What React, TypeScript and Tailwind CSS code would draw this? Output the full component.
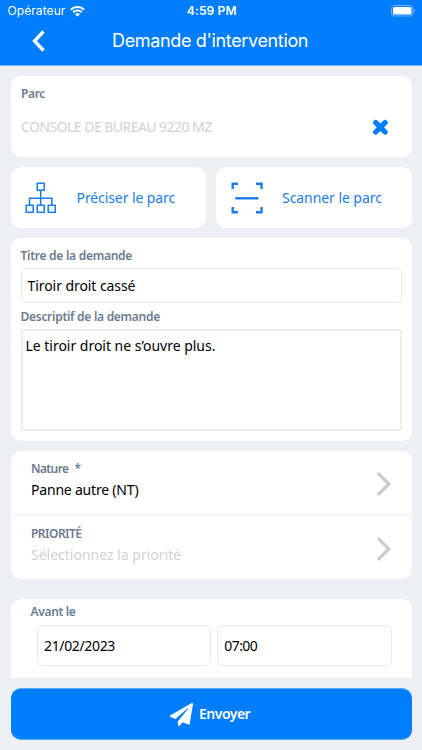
import type { ReactNode } from "react";
import { FaPaperPlane } from "react-icons/fa";

const label = "text-[12px] leading-4 font-semibold text-[#6c7b8e] whitespace-nowrap";
const value = "text-[14px] leading-5 whitespace-nowrap";

function WifiIcon() {
  return (
    <svg className="ml-[5px] h-[11px] w-[15px]" viewBox="0 0 15 11" fill="white">
      <path d="M7.5 0C4.7 0 2.100 1.100.2 2.900L1.600 4.400A8.500 8.500 0 0 1 13.400 4.400L14.800 2.900A10.600 10.600 0 0 0 7.500 0Z" />
      <path d="M7.500 3.600C5.600 3.600 3.900 4.300 2.600 5.500L4 7A5.100 5.100 0 0 1 11 7L12.400 5.500A7.200 7.200 0 0 0 7.500 3.600Z" />
      <path d="M7.500 7.100C6.500 7.100 5.600 7.500 5 8.100L7.500 10.700L10 8.100A3.600 3.600 0 0 0 7.500 7.100Z" />
    </svg>
  );
}

function BatteryIcon() {
  return (
    <svg className="h-[12px] w-[25px]" viewBox="0 0 25 12" fill="none">
      <rect x="0.500" y="0.500" width="21.500" height="10.500" rx="3" stroke="#6db4ff" />
      <rect x="2" y="2" width="18.500" height="7.500" rx="1.500" fill="white" />
      <path d="M23.300 4v3.600q1.100-.5 1.100-1.800t-1.100-1.800z" fill="#6db4ff" />
    </svg>
  );
}

function TreeIcon() {
  return (
    <svg className="h-[32px] w-[32px]" viewBox="0 0 32 32" fill="none" stroke="#1b7ce8" strokeWidth="1.500">
      <rect x="12.200" y="1.200" width="7" height="7" />
      <rect x="1.200" y="23.300" width="7" height="7" />
      <rect x="12.200" y="23.300" width="7" height="7" />
      <rect x="23.200" y="23.300" width="7" height="7" />
      <path d="M15.700 8.200V23.300M4.500 23.300V16.300H26.900V23.300" />
    </svg>
  );
}

function ScanIcon() {
  return (
    <svg className="h-[32px] w-[32px]" viewBox="0 0 32 32" fill="none" stroke="#1b7ce8" strokeWidth="2.400">
      <path d="M1.700 7V1.700H7M25 1.700H30.500V7M30.500 25V30.300H25M7 30.300H1.700V25" />
      <path d="M4.300 16.300H27.500" />
    </svg>
  );
}

function ChevronRight() {
  return (
    <svg className="mt-[2px] h-[24px] w-[15px] shrink-0" viewBox="0 0 15 24" fill="none" stroke="#cdcdcd" strokeWidth="3.300" strokeLinecap="round">
      <path d="M1.800 2L11.800 12L1.800 22" />
    </svg>
  );
}

function ActionCard({ icon, children }: { icon: ReactNode; children: ReactNode }) {
  return (
    <button className="flex h-[61px] flex-1 items-center rounded-[10px] bg-white pl-[14.5px]">
      {icon}
      {children}
    </button>
  );
}

export default function App() {
  return (
    <div className="flex h-[750px] w-[422px] flex-col overflow-hidden bg-[#edeff3] font-['Noto_Sans','Open_Sans',sans-serif] text-black">
      <header className="h-[66px] shrink-0 border-b border-[#75b6fb] bg-[#007dfb] font-['Inter','Liberation_Sans',sans-serif] text-white">
        <div className="grid h-[22px] grid-cols-[1fr_auto_1fr] items-center pr-[6px] pl-[7.5px] text-[12px] leading-4">
          <div className="flex items-center">
            <span className="tracking-[0.08px]">Opérateur</span>
            <WifiIcon />
          </div>
          <span className="font-semibold tracking-[0.150px]">4:59 PM</span>
          <div className="flex justify-end"><BatteryIcon /></div>
        </div>
        <div className="flex h-[38px] items-center">
          <svg className="ml-[31px] h-[22px] w-[15px]" viewBox="0 0 15 22" fill="none" stroke="white" strokeWidth="3.300">
            <path d="M12.500 1.500L3.500 11L12.500 20.500" />
          </svg>
          <h1 className="ml-[66px] text-[18px] leading-6 font-[380] tracking-[-0.350px] whitespace-nowrap">Demande d'intervention</h1>
        </div>
      </header>

      <main className="flex h-[611.500px] shrink-0 flex-col gap-[10px] overflow-hidden px-[10.500px] pt-[10px]">
        <section className="h-[81px] shrink-0 rounded-[10px] bg-white px-[10.500px] pt-[10px]">
          <p className={label + " tracking-[-0.35px]"}>Parc</p>
          <div className="mt-[15px] flex items-center justify-between pr-[12px]">
            <span className={value + " tracking-[-0.540px] text-[#d2d2d2]"}>CONSOLE DE BUREAU 9220 MZ</span>
            <svg className="h-[17px] w-[17px]" viewBox="0 0 17 17" fill="none" stroke="#007dfb" strokeWidth="5.300" strokeLinecap="round">
              <path d="M3.700 3.600L13.100 13M13.100 3.600L3.700 13" />
            </svg>
          </div>
        </section>

        <div className="flex shrink-0 gap-[10px] text-[14px] leading-5 text-[#1b7ce8]">
          <ActionCard icon={<TreeIcon />}>
            <span className="ml-[19.500px] tracking-[-0.090px] whitespace-nowrap">Préciser le parc</span>
          </ActionCard>
          <ActionCard icon={<ScanIcon />}>
            <span className="ml-[19.500px] tracking-[-0.060px] whitespace-nowrap">Scanner le parc</span>
          </ActionCard>
        </div>

        <section className="flex h-[203px] shrink-0 flex-col rounded-[10px] bg-white px-[10px] pt-[10px]">
          <p className={label + " tracking-[-0.270px]"}>Titre de la demande</p>
          <div className="mt-[4px] flex h-[35px] shrink-0 items-center rounded-[5px] border border-[#e9eaee] px-[6px]">
            <span className={value + " tracking-[-0.070px]"}>Tiroir droit cassé</span>
          </div>
          <p className={label + " mt-[6px] tracking-[-0.280px]"}>Descriptif de la demande</p>
          <div className="mt-[4px] h-[102px] shrink-0 rounded-[3px] border-2 border-[#ecedf1] px-[3px] pt-[5px]">
            <p className={value + " tracking-[-0.020px]"}>Le tiroir droit ne s’ouvre plus.</p>
          </div>
        </section>

        <section className="h-[127.500px] shrink-0 rounded-[10px] bg-white">
          <div className="flex h-[65px] items-center justify-between border-b-2 border-[#f5f5f7] pr-[20px] pl-[20.500px]">
            <div className="pb-[4px]">
              <p className={label + " flex gap-[6px] tracking-[-0.600px]"}><span>Nature</span><span>*</span></p>
              <p className={value + " mt-[3px] tracking-[-0.200px]"}>Panne autre (NT)</p>
            </div>
            <ChevronRight />
          </div>
          <div className="flex h-[64px] items-center justify-between pr-[20px] pl-[20.500px]">
            <div className="pb-[6px]">
              <p className={label + " tracking-[-0.520px]"}>PRIORITÉ</p>
              <p className={value + " mt-[3px] text-[#d2d2d2]"}>Sélectionnez la priorité</p>
            </div>
            <ChevronRight />
          </div>
        </section>

        <section className="mt-[10.500px] h-[100px] shrink-0 rounded-[10px] bg-white pt-[5px]">
          <p className={label + " pl-[20px] tracking-[-0.340px]"}>Avant le</p>
          <div className="mt-[5px] flex gap-[6px] pr-[20px] pl-[26.500px]">
            <div className="flex h-[41px] flex-1 items-center rounded-[5px] border border-[#e9eaee] pl-[6px]">
              <span className={value + " tracking-[-0.350px]"}>21/02/2023</span>
            </div>
            <div className="flex h-[41px] flex-1 items-center rounded-[5px] border border-[#e9eaee] pl-[6px]">
              <span className={value + " tracking-[-0.550px]"}>07:00</span>
            </div>
          </div>
        </section>
      </main>

      <footer className="px-[10.500px] pt-[10.500px]">
        <button className="flex h-[52px] w-full items-center rounded-[10px] border-y border-[#5aaafb] bg-[#007dfb] pl-[159.500px] text-white">
          <FaPaperPlane className="h-[23px] w-[23px]" />
          <span className="ml-[6px] text-[14px] leading-5 font-semibold tracking-[-0.500px]">Envoyer</span>
        </button>
      </footer>
    </div>
  );
}
